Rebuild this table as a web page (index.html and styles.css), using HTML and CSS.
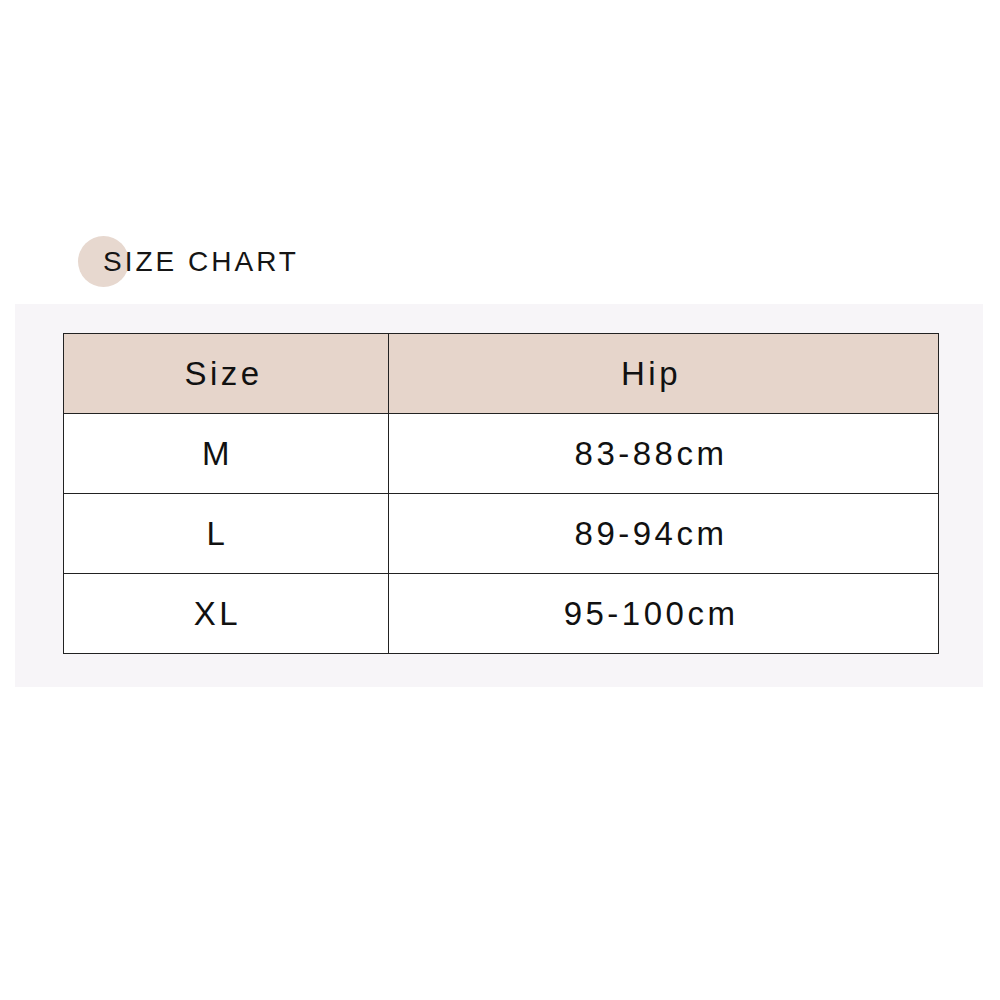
FILE: index.html
```html
<!DOCTYPE html>
<html>
<head>
<meta charset="utf-8">
<link rel="stylesheet" href="styles.css">
</head>
<body>
<div class="page">
  <div class="title-row">
    <h1 class="title">SIZE CHART</h1>
  </div>
  <div class="panel">
    <table class="chart">
      <thead>
        <tr><th class="col-size">Size</th><th class="col-hip">Hip</th></tr>
      </thead>
      <tbody>
        <tr><td class="col-size">M</td><td class="col-hip">83-88cm</td></tr>
        <tr><td class="col-size">L</td><td class="col-hip">89-94cm</td></tr>
        <tr><td class="col-size">XL</td><td class="col-hip">95-100cm</td></tr>
      </tbody>
    </table>
  </div>
</div>
</body>
</html>
```
FILE: styles.css
```css
html, body {
  margin: 0;
  padding: 0;
  background: #ffffff;
}
body {
  width: 1000px;
  height: 1000px;
  font-family: "Liberation Sans", Arial, sans-serif;
  color: #111111;
}
.page {
  padding-top: 236px;
}
.title-row {
  height: 68px;
  padding-left: 103px;
  isolation: isolate;
}
.title {
  position: relative;
  z-index: 0;
  margin: 0;
  display: inline-block;
  font-size: 28px;
  font-weight: normal;
  letter-spacing: 3px;
  line-height: 51px;
  color: #151515;
}
.title::before {
  content: "";
  position: absolute;
  left: -25px;
  top: 0;
  width: 51px;
  height: 51px;
  border-radius: 50%;
  background: #e7d8cf;
  z-index: -1;
}
.panel {
  margin-left: 15px;
  width: 968px;
  height: 383px;
  background: #f7f5f8;
  padding-top: 29px;
  padding-left: 48px;
  box-sizing: border-box;
}
.chart {
  border-collapse: collapse;
  width: 876px;
  background: #ffffff;
}
.chart th, .chart td {
  border: 1px solid #222222;
  height: 79px;
  padding: 0;
  text-align: center;
  font-size: 33px;
  font-weight: normal;
  letter-spacing: 3.5px;
  color: #111111;
}
.chart th {
  background: #e6d5cb;
}
.chart .col-size {
  width: 325px;
  padding-right: 17px;
  box-sizing: border-box;
}
.chart th.col-size {
  padding-right: 5px;
}
.chart .col-hip {
  padding-right: 25px;
}
```
